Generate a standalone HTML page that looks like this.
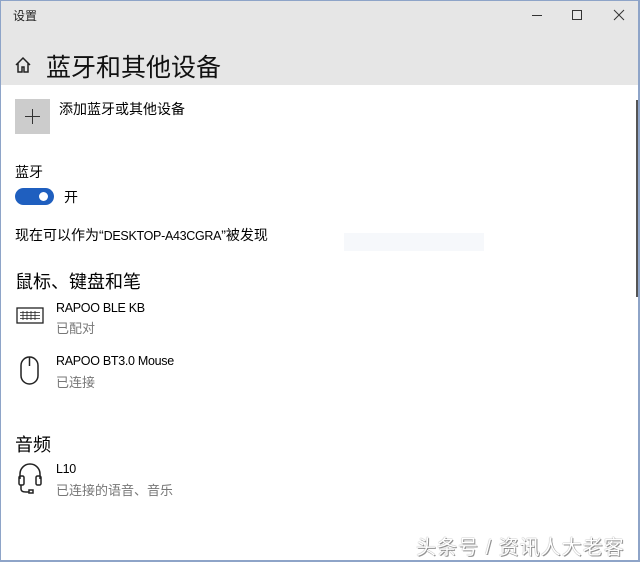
<!DOCTYPE html>
<html><head><meta charset="utf-8"><style>
*{margin:0;padding:0;box-sizing:border-box}
body{width:640px;height:562px;background:#fff;position:relative;overflow:hidden;font-family:"Liberation Sans","Noto Sans CJK SC",sans-serif;color:#000}
.a{position:absolute;white-space:nowrap}
.l{font-size:12.5px;letter-spacing:-0.3px}
</style></head><body>
<div class="a" style="left:0;top:0;width:640px;height:562px;border:1px solid #8ea4c8;border-width:1px 2px 2px 1px"></div>
<div class="a" style="left:1px;top:1px;width:637px;height:84px;background:#e6e6e6"></div>
<div class="a" style="left:13px;top:7px;font-size:12px;color:#222">设置</div>
<svg class="a" style="left:530px;top:8px" width="100" height="16" viewBox="0 0 100 16" fill="none" stroke="#333" stroke-width="1">
<path d="M2 7.5H12"/><rect x="42.5" y="2.5" width="9" height="9"/><path d="M84 2L94 12M94 2L84 12"/></svg>
<svg class="a" style="left:14px;top:56px" width="18" height="18" viewBox="0 0 18 18" fill="none" stroke="#222" stroke-width="1.5"><path d="M2 9L9 2L16 9M4 7V16H8V11H10V16H14V7"/></svg>
<div class="a" style="left:46px;top:48px;font-size:25px;color:#111">蓝牙和其他设备</div>
<div class="a" style="left:636px;top:100px;width:2px;height:197px;background:#555"></div>
<div class="a" style="left:15px;top:99px;width:35px;height:35px;background:#ccc"></div>
<div class="a" style="left:25px;top:116px;width:15px;height:1px;background:#333"></div>
<div class="a" style="left:32px;top:109px;width:1px;height:15px;background:#333"></div>
<div class="a" style="left:59px;top:99px;font-size:14px">添加蓝牙或其他设备</div>
<div class="a" style="left:15px;top:162px;font-size:14px">蓝牙</div>
<div class="a" style="left:15px;top:188px;width:39px;height:17px;border-radius:9px;background:#1f5fbf"></div>
<div class="a" style="left:39px;top:192px;width:9px;height:9px;border-radius:50%;background:#fff"></div>
<div class="a" style="left:64px;top:187px;font-size:14px">开</div>
<div class="a" style="left:15px;top:225px;font-size:14px">现在可以作为“<span class="l">DESKTOP-A43CGRA</span>”被发现</div>
<div class="a" style="left:344px;top:233px;width:140px;height:18px;background:#f6f8fb"></div>
<div class="a" style="left:15px;top:268px;font-size:18px">鼠标、键盘和笔</div>
<svg class="a" style="left:16px;top:306px" width="28" height="20" viewBox="0 0 28 20" fill="none" stroke="#222" stroke-width="1.3"><rect x="1" y="2" width="26" height="15"/><path d="M4 6.5H24M4 9.5H24M4 12.5H24M7 5V14M11 5V14M15 5V14M19 5V14" stroke-width="0.8"/></svg>
<div class="a l" style="left:56px;top:301px">RAPOO BLE KB</div>
<div class="a" style="left:56px;top:318px;font-size:13px;color:#777">已配对</div>
<svg class="a" style="left:18px;top:355px" width="24" height="32" viewBox="0 0 24 32" fill="none" stroke="#222" stroke-width="1.5"><rect x="3" y="2" width="17" height="27" rx="8.5"/><path d="M11.5 2V11"/></svg>
<div class="a l" style="left:56px;top:354px">RAPOO BT3.0 Mouse</div>
<div class="a" style="left:56px;top:372px;font-size:13px;color:#777">已连接</div>
<div class="a" style="left:15px;top:431px;font-size:18px">音频</div>
<svg class="a" style="left:17px;top:463px" width="26" height="32" viewBox="0 0 26 32" fill="none" stroke="#222" stroke-width="1.5"><path d="M3 16V11A10 10 0 0 1 23 11V16"/><rect x="2" y="13" width="5" height="9" rx="1.5"/><rect x="19" y="13" width="5" height="9" rx="1.5"/><path d="M4 22V26Q4 29 9 29H12"/><rect x="12" y="27" width="4" height="3"/></svg>
<div class="a l" style="left:56px;top:462px">L10</div>
<div class="a" style="left:56px;top:480px;font-size:13px;color:#777">已连接的语音、音乐</div>
<div class="a" style="left:416px;top:531px;font-size:20px;letter-spacing:1px;color:#fff;text-shadow:0 0 1px #666,1px 1px 0 #999">头条号 / 资讯人大老客</div>
</body></html>
